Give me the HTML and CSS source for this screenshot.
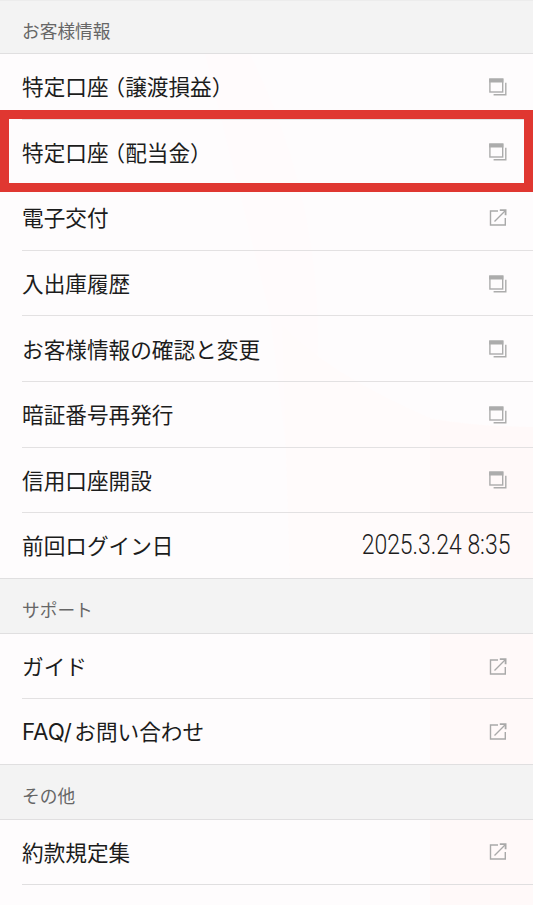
FILE: index.html
```
<!DOCTYPE html>
<html lang="ja">
<head>
    <meta charset="UTF-8">
    <meta name="viewport" content="width=device-width, initial-scale=1.0">
    <title>お客様情報</title>
    <link rel="stylesheet" href="styles.css">
</head>
<body>

<!-- icônes partagées -->
<svg class="sprite" aria-hidden="true">
    <symbol id="window" viewBox="0 0 18 18">
        <rect x="0.9" y="1.2" width="12.8" height="12.8" fill="none" stroke="#acacac" stroke-width="1.4"/>
        <rect x="0.2" y="0.5" width="14.2" height="4" fill="#acacac"/>
        <path d="M16.8 4.8V16.8H4.6" fill="none" stroke="#acacac" stroke-width="1.4"/>
    </symbol>
    <symbol id="external" viewBox="0 0 18 18">
        <path d="M9 2H1.5V16H16.3V8.9M5.5 12.4L16 2" fill="none" stroke="#a9a9a9" stroke-width="1.4"/>
        <path d="M10.8 1.2H16.6V6.3" fill="none" stroke="#a9a9a9" stroke-width="1.8"/>
    </symbol>
</svg>

<!-- motif de fond -->
<svg class="backdrop" viewBox="0 0 533 905" aria-hidden="true">
    <path d="M205 54H250Q318 190 318 340Q318 440 294 513L270 315Z" fill="#fffbfc"/>
    <path d="M282 325Q330 375 430 418Q480 427 533 427V578H290Z" fill="#fffbfb"/>
    <path d="M430 419Q480 427 533 427V578H430Z" fill="#fff9f9"/>
    <path d="M430 633H533V905H430Z" fill="#fff9f9"/>
</svg>

<main>
    <h2>お客様情報</h2>
    <ul>
        <li><span>特定口座<span class="paren">（</span>譲渡損益）</span><svg class="icon"><use href="#window"/></svg></li>
        <li class="selected"><span>特定口座<span class="paren">（</span>配当金）</span><svg class="icon"><use href="#window"/></svg></li>
        <li><span>電子交付</span><svg class="icon"><use href="#external"/></svg></li>
        <li><span>入出庫履歴</span><svg class="icon"><use href="#window"/></svg></li>
        <li><span>お客様情報の確認と変更</span><svg class="icon"><use href="#window"/></svg></li>
        <li><span>暗証番号再発行</span><svg class="icon"><use href="#window"/></svg></li>
        <li><span>信用口座開設</span><svg class="icon"><use href="#window"/></svg></li>
        <li><span>前回ログイン日</span><span class="date">2025.3.24 8:35</span></li>
    </ul>

    <h2>サポート</h2>
    <ul>
        <li><span>ガイド</span><svg class="icon"><use href="#external"/></svg></li>
        <li><span><span class="latin">FAQ/</span>お問い合わせ</span><svg class="icon"><use href="#external"/></svg></li>
    </ul>

    <h2>その他</h2>
    <ul class="last">
        <li><span>約款規定集</span><svg class="icon"><use href="#external"/></svg></li>
    </ul>
</main>

</body>
</html>
```
FILE: styles.css
```
* {
    box-sizing: border-box;
}

body {
    margin: 0;
    height: 905px;
    overflow: hidden;
    position: relative;
    background-color: #fefcfd;
    color: #1c1c1c;
    font-family: "Noto Sans CJK JP", sans-serif;
}

.sprite {
    position: absolute;
    width: 0;
    height: 0;
}

.backdrop {
    position: absolute;
    top: 0;
    left: 0;
    width: 533px;
    height: 905px;
}

main {
    position: relative;
}

h2 {
    margin: 0;
    height: 55px;
    padding: 5px 22px 0;
    border-bottom: 1px solid #e0dfe0;
    background-color: #f3f3f3;
    color: #666;
    font-size: 17.7px;
    font-weight: 400;
    line-height: 50px;
}

h2:first-child {
    height: 54px;
    padding-top: 4px;
    border-top: 1px solid #ececec;
}

ul {
    margin: 0;
    padding: 0 0 0 22px;
    list-style: none;
    border-bottom: 1px solid #e0dfe0;
}

li {
    height: 65.6px;
    padding-right: 26px;
    border-bottom: 1px solid #e3e1e2;
    display: flex;
    align-items: center;
    justify-content: space-between;
    font-size: 21.65px;
    line-height: 32px;
    white-space: nowrap;
}

li:last-child {
    height: 64.6px;
    border-bottom: none;
}

.last {
    margin-left: 22px;
    padding-left: 0;
}

.last li {
    height: 64px;
}

.paren {
    margin-left: 5.8px;
    font-feature-settings: "halt";
}

.latin {
    font-family: Inter, sans-serif;
    font-size: 22.4px;
    letter-spacing: -0.1px;
    margin-right: 2.5px;
}

.icon {
    width: 18px;
    height: 18px;
    margin-top: 1px;
}

.date {
    margin-right: -3px;
    font-family: Roboto, sans-serif;
    font-size: 28px;
    font-weight: 300;
    transform: scaleX(0.82);
    transform-origin: right center;
}

/* cadre rouge autour de la ligne choisie */
.selected {
    position: relative;
}

.selected::after {
    content: "";
    position: absolute;
    top: -10px;
    bottom: -8px;
    left: -22px;
    right: 0;
    border: 9px solid #e03731;
    z-index: 1;
}
```
